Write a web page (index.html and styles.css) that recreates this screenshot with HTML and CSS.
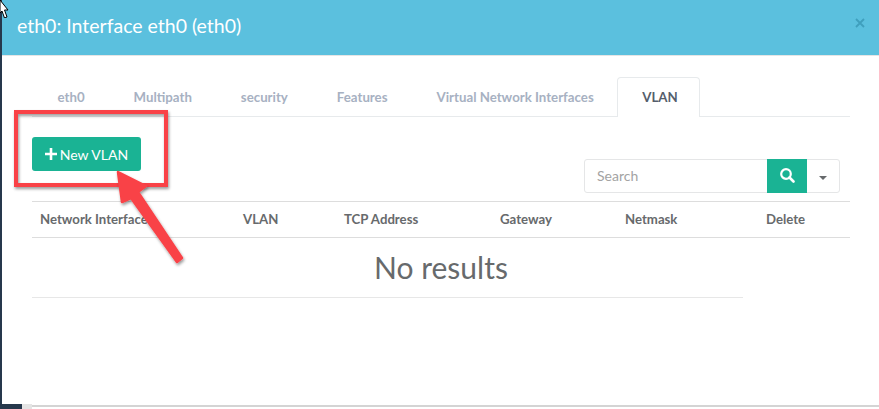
FILE: index.html
```html
<!DOCTYPE html>
<html lang="en">
<head>
<meta charset="utf-8">
<title>eth0: Interface eth0 (eth0)</title>
<link rel="stylesheet" href="styles.css">
</head>
<body>
<div class="page">
  <div class="modal">
    <header class="modal-header">
      <h1 class="modal-title">eth0: Interface eth0 (eth0)</h1>
      <svg class="close" width="10" height="10" viewBox="0 0 10 10"><path d="M1 1l8 8M9 1l-8 8" stroke="#3f9fbd" stroke-width="1.8" fill="none"/></svg>
    </header>
    <div class="modal-body">
      <ul class="tabs">
        <li class="tab">eth0</li>
        <li class="tab">Multipath</li>
        <li class="tab">security</li>
        <li class="tab">Features</li>
        <li class="tab">Virtual Network Interfaces</li>
        <li class="tab active">VLAN</li>
      </ul>
      <div class="toolbar">
        <button class="btn-new"><svg width="12" height="12" viewBox="0 0 12 12"><path d="M6 0v12M0 6h12" stroke="#fff" stroke-width="2.6"/></svg>New VLAN</button>
      </div>
      <div class="search-row">
        <div class="search">
          <div class="search-input">Search</div>
          <div class="search-btn"><svg width="16" height="16" viewBox="0 0 16 16"><circle cx="7" cy="7" r="4.8" fill="none" stroke="#fff" stroke-width="2.2"/><path d="M10.5 10.5l4 4" stroke="#fff" stroke-width="2.6" stroke-linecap="round"/></svg></div>
          <div class="search-drop"><span class="caret"></span></div>
        </div>
      </div>
      <div class="thead">
        <div>Network Interface</div>
        <div>VLAN</div>
        <div>TCP Address</div>
        <div>Gateway</div>
        <div>Netmask</div>
        <div>Delete</div>
      </div>
      <div class="empty">No results</div>
    </div>
  </div>
  <div class="corner"><div class="corner-dark"></div><div class="corner-light"></div></div>
</div>
<svg class="annotation" width="879" height="409" viewBox="0 0 879 409">
  <defs>
    <filter id="sh" x="-20%" y="-20%" width="140%" height="140%"><feDropShadow dx="1" dy="2" stdDeviation="1.5" flood-color="#000" flood-opacity=".4"/></filter>
  </defs>
  <rect x="16" y="112" width="150" height="73" fill="none" stroke="#f94347" stroke-width="4" filter="url(#sh)"/>
  <path d="M118 172L146 186 138 192 182 258 177 262 131 198 122 202Z" fill="#f94347" stroke="#f94347" stroke-width="2.5" stroke-linejoin="round" filter="url(#sh)"/>
</svg>
<svg class="cursor" width="9" height="18" viewBox="0 0 9 18"><path d="M0 0L8 10 4.5 10 7 17 4.5 18 2 11 0 13Z" fill="#fff" stroke="#000" stroke-width="1"/></svg>
</body>
</html>
```
FILE: styles.css
```css
* { box-sizing: border-box; }
html, body { margin: 0; padding: 0; width: 879px; height: 409px; overflow: hidden; background: #fff; }
body { font-family: Lato, "Liberation Sans", sans-serif; position: relative; }
.page { width: 879px; height: 409px; display: flex; flex-direction: column; border-left: 2px solid #26384c; position: relative; }
.modal { height: 407px; display: flex; flex-direction: column; border-bottom: 2px solid #d4d4d4; }
.modal-header { height: 56px; flex: none; background: #5bc0de; border-bottom: 1px solid #e5e5e5; display: flex; align-items: center; justify-content: space-between; padding: 0 14px 3px 15px; }
.modal-title { margin: 0; font-size: 19.5px; font-weight: 400; color: #fff; line-height: 1; }
.close { margin-top: -6px; }
.modal-body { flex: 1; padding: 21px 29px 0 30px; display: flex; flex-direction: column; }
.tabs { list-style: none; margin: 0; padding: 0 0 0 1px; height: 40px; flex: none; display: flex; border-bottom: 1px solid #e7eaec; }
.tab { padding: 0 24.5px; font-size: 13.25px; font-weight: 700; color: #a7b1c2; line-height: 40px; }
.tab.active { color: #555e6c; background: #fff; border: 1px solid #e7eaec; border-bottom: 0; border-radius: 4px 4px 0 0; padding: 0 21px 0 24px; line-height: 38px; height: 40px; margin-left: -1px; }
.toolbar { margin-top: 20px; height: 34px; flex: none; }
.btn-new { width: 109px; height: 34px; border: 0; border-radius: 3px; background: #1ab394; color: #fff; font: 400 14px Lato, "Liberation Sans", sans-serif; display: flex; align-items: center; justify-content: center; gap: 3px; padding: 0; }
.search-row { margin-top: -12px; height: 34px; flex: none; display: flex; justify-content: flex-end; padding-right: 10px; }
.search { width: 256px; height: 34px; display: flex; border: 1px solid #e5e6e7; border-radius: 3px; }
.search-input { width: 182px; padding-left: 12px; font-size: 14px; line-height: 32px; color: #a3a3a3; }
.search-btn { width: 40px; margin: -1px 0; background: #1ab394; display: flex; align-items: center; justify-content: center; }
.search-btn svg { margin-top: -2px; }
.search-drop { flex: 1; display: flex; align-items: center; justify-content: center; }
.caret { border: 4px solid transparent; border-top-color: #676a6c; border-bottom: 0; margin-top: 3px; }
.thead { margin-top: 8px; height: 37px; flex: none; display: grid; grid-template-columns: 203px 101px 156px 125px 141px 1fr; border-top: 1px solid #ddd; border-bottom: 1px solid #ddd; font-size: 13.2px; font-weight: 700; color: #676a6c; align-items: center; padding-bottom: 2px; }
.thead div { padding-left: 8px; }
.empty { width: 711px; height: 60px; flex: none; border-bottom: 1px solid #e7e7e7; font-size: 30px; line-height: 58px; color: #676a6c; text-align: center; padding-left: 107px; white-space: nowrap; }
.corner { position: absolute; left: -2px; bottom: 0; display: flex; height: 5px; }
.corner-dark { width: 22px; background: #26384c; }
.corner-light { width: 10px; background: #e4e4e4; }
.annotation { position: absolute; left: 0; top: 0; pointer-events: none; }
.cursor { position: absolute; left: 0; top: 0; }
```
